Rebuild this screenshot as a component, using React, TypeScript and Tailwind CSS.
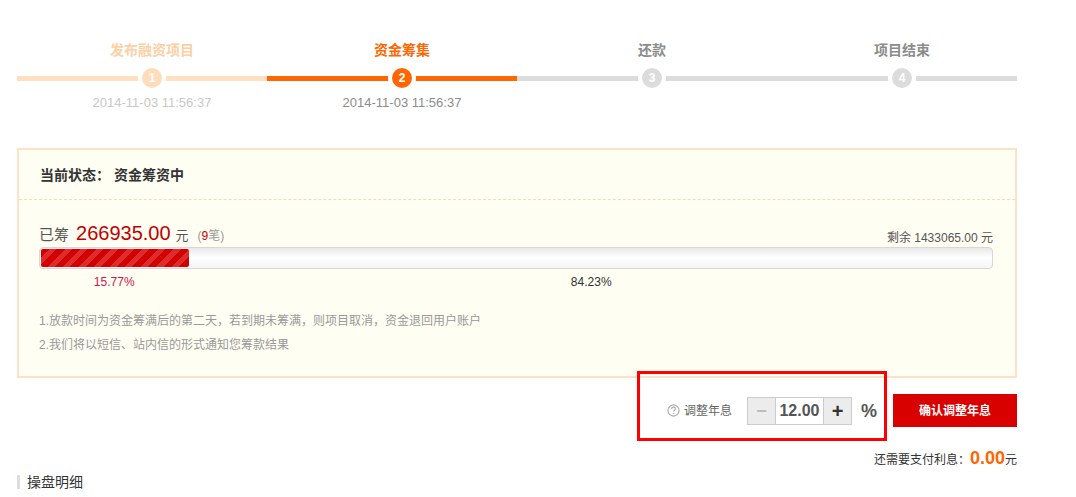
const steps = [
  { title: '发布融资项目', num: 1, date: '2014-11-03 11:56:37', titleCls: 'text-[#fdcfa5]', dotCls: 'bg-[#ffdcbb]', dateCls: 'text-[#c8c8c8]' },
  { title: '资金筹集', num: 2, date: '2014-11-03 11:56:37', titleCls: 'text-[#ff6600]', dotCls: 'bg-[#ff6600]', dateCls: 'text-[#8c8c8c]' },
  { title: '还款', num: 3, date: '', titleCls: 'text-[#8c8c8c]', dotCls: 'bg-[#dcdcdc]', dateCls: '' },
  { title: '项目结束', num: 4, date: '', titleCls: 'text-[#8c8c8c]', dotCls: 'bg-[#dcdcdc]', dateCls: '' },
];

export default function App() {
  return (
    <div className="relative w-[1076px] h-[497px] bg-white font-['Liberation_Sans','Noto_Sans_CJK_SC',sans-serif] text-[#333] overflow-hidden">
      <div className="ml-[17px] w-[1000px]">
        {/* 进度步骤 */}
        <div className="relative pt-[40px]">
          <div className="absolute left-0 top-[76px] flex w-[1000px] h-[5px]">
            <div className="w-[250px] bg-[#ffdfc0]" />
            <div className="w-[250px] bg-[#ff6600]" />
            <div className="w-[250px] bg-[#dcdcdc]" />
            <div className="w-[250px] bg-[#dcdcdc]" />
          </div>
          <div className="relative ml-[10px] grid grid-cols-[repeat(4,250px)]">
            {steps.map((s) => (
              <div key={s.num} className="flex flex-col items-center">
                <div className={`text-sm font-bold leading-5 ${s.titleCls}`}>{s.title}</div>
                <div className={`mt-[4px] w-7 h-7 rounded-full border-4 border-white flex items-center justify-center text-white text-xs font-bold ${s.dotCls}`}>
                  {s.num}
                </div>
                <div className={`mt-[3px] h-4 text-[13px] leading-4 ${s.dateCls}`}>{s.date}</div>
              </div>
            ))}
          </div>
        </div>

        {/* 当前状态 */}
        <div className="mt-[37px] h-[230px] border-2 border-[#fde2c8] bg-[#fffef3]">
          <div className="h-[50px] flex items-center pl-[21px] border-b border-dashed border-[#fcd9b4] text-sm font-bold text-[#333]">
            当前状态： 资金筹资中
          </div>
          <div className="pl-[20px] pr-[22px] pt-[24px]">
            <div className="flex items-end justify-between h-[22px]">
              <div className="flex items-baseline">
                <span className="text-[15px] text-[#555]">已筹</span>
                <span className="ml-[7px] text-[20px] leading-[22px] text-[#c00000]">266935.00</span>
                <span className="ml-[5px] text-[13px] text-[#555]">元</span>
                <span className="ml-[9px] text-xs text-[#999]">(<span className="text-[#c00000]">9</span>笔)</span>
              </div>
              <div className="text-xs text-[#555]">剩余 1433065.00 元</div>
            </div>
            <div className="mt-[1px] h-[22px] rounded-[4px] border border-[#d8d8d8] bg-gradient-to-b from-[#e9e9e9] via-white to-[#f4f4f4] p-[1px]">
              <div
                className="h-full rounded-[2px] bg-[repeating-linear-gradient(135deg,#d20000_0px,#d20000_6px,#de2b2b_6px,#de2b2b_11px)]"
                style={{ width: '15.55%' }}
              />
            </div>
            <div className="flex text-xs leading-4 mt-[5px]">
              <div className="w-[15.77%] text-center text-[#d2134f]">15.77%</div>
              <div className="flex-1 text-center text-[#333]">84.23%</div>
            </div>
            <div className="mt-[19px] text-xs leading-6 text-[#999]">
              <p>1.放款时间为资金筹满后的第二天，若到期未筹满，则项目取消，资金退回用户账户</p>
              <p>2.我们将以短信、站内信的形式通知您筹款结果</p>
            </div>
          </div>
        </div>

        {/* 调整年息 */}
        <div className="mt-[16px] flex items-center justify-end h-[33px]">
          <div className="flex items-center text-xs text-[#666]">
            <svg width="13" height="13" viewBox="0 0 14 14" className="mr-[4px]">
              <circle cx="7" cy="7" r="6" fill="none" stroke="#aaa" strokeWidth="1.2" />
              <path d="M5 5.4a2 2 0 0 1 4 0c0 1.3-2 1.4-2 2.8" fill="none" stroke="#aaa" strokeWidth="1.2" />
              <circle cx="7" cy="10.3" r="0.8" fill="#aaa" />
            </svg>
            调整年息
          </div>
          <div className="ml-[15px] flex h-[28px] border border-[#ccc]">
            <div className="w-[27px] bg-[#ececec] flex items-center justify-center text-[#bbb] text-lg font-bold">−</div>
            <div className="w-[49px] border-x border-[#ccc] bg-white flex items-center justify-center text-base font-bold text-[#555]">12.00</div>
            <div className="w-[27px] bg-[#ececec] flex items-center justify-center text-[#333] text-xl font-bold">+</div>
          </div>
          <div className="ml-[9px] text-lg font-bold text-[#555]">%</div>
          <button className="ml-[16px] w-[124px] h-[33px] bg-[#d90000] text-white text-xs font-bold">确认调整年息</button>
        </div>

        <div className="mt-[17px] flex items-baseline justify-end text-xs text-[#333]">
          还需要支付利息：<span className="text-lg font-bold text-[#ff6600]">0.00</span>元
        </div>

        <div className="mt-0 flex items-center h-5">
          <div className="w-[3px] h-[14px] bg-[#dedede]" />
          <div className="ml-[7px] text-sm text-[#333]">操盘明细</div>
        </div>
      </div>

      {/* 标注框 */}
      <div className="absolute left-[637px] top-[371px] w-[250px] h-[70px] border-[3px] border-[#ff0000]" />
    </div>
  );
}
